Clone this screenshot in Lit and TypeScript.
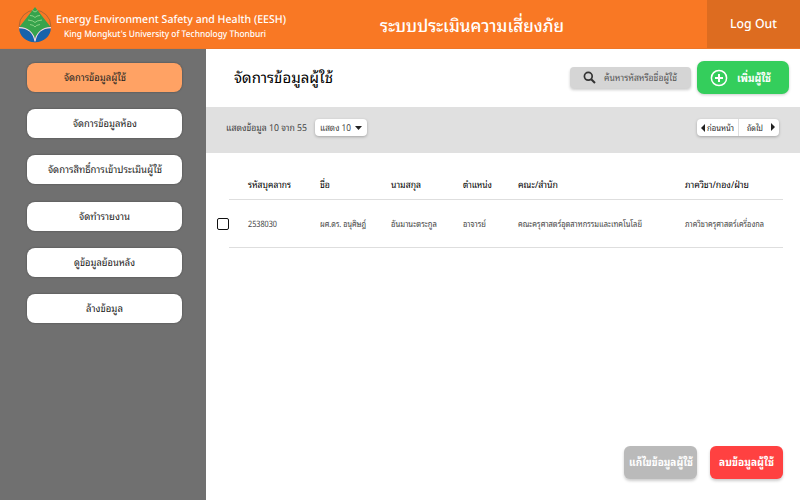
import { LitElement, html, css, svg } from "lit";
import { customElement, property } from "lit/decorators.js";

/* Single line of text condensed or expanded to a given advance width. */
@customElement("fit-label")
class FitLabel extends LitElement {
  @property() text = "";
  @property({ type: Number }) w = 0;
  static styles = css`
    :host { display: block; flex: none; line-height: 0; }
    svg { display: block; height: 1.8em; overflow: visible; }
    text { fill: currentColor; text-rendering: geometricPrecision; }
  `;
  render() {
    return html`<svg width=${this.w} aria-label=${this.text}>
      ${svg`<text x="0" y="1.25em" textLength=${this.w} lengthAdjust="spacingAndGlyphs">${this.text}</text>`}
    </svg>`;
  }
}

const MENU = [
  { text: "จัดการข้อมูลผู้ใช้", w: 62, active: true },
  { text: "จัดการข้อมูลห้อง", w: 64 },
  { text: "จัดการสิทธิ์การเข้าประเมินผู้ใช้", w: 114 },
  { text: "จัดทำรายงาน", w: 51 },
  { text: "ดูข้อมูลย้อนหลัง", w: 61 },
  { text: "ล้างข้อมูล", w: 37 },
];

const HEADS: [string, number][] = [
  ["รหัสบุคลากร", 43], ["ชื่อ", 10], ["นามสกุล", 30],
  ["ตำแหน่ง", 29], ["คณะ/สำนัก", 40], ["ภาควิชา/กอง/ฝ่าย", 64],
];
const ROW: [string, number][] = [
  ["2538030", 29], ["ผศ.ดร. อนุศิษฎ์", 46], ["อันมานะตระกูล", 46],
  ["อาจารย์", 23], ["คณะครุศาสตร์อุตสาหกรรมและเทคโนโลยี", 124], ["ภาควิชาครุศาสตร์เครื่องกล", 79],
];

@customElement("app-root")
class AppRoot extends LitElement {
  static styles = css`
    :host {
      display: flex; flex-direction: column; width: 800px; height: 500px; overflow: hidden;
      background: #fff; color: #222; font-size: 9.5px;
      font-family: "Noto Sans", "Noto Sans Thai Looped", "Noto Looped Thai", "Sarabun", "TH Sarabun New", "Loma", "Open Sans", sans-serif;
    }
    * { box-sizing: border-box; }
    header { display: flex; height: 49px; background: #f97824; color: #fff; border-bottom: 1px solid #ee7628; flex: none; }
    .logo { width: 34px; height: 38px; margin: 6px 3px 0 18px; flex: none; }
    .brand { width: 325px; padding: 9px 0 0 1px; font-size: 10.9px; font-weight: 500; }
    .brand .sub { font-size: 9.2px; margin: -4px 0 0 7.5px; font-weight: 500; }
    .system { padding-top: 10px; font-size: 17.5px; font-weight: 500; flex: 1; }
    .logout { width: 93px; background: #dd6c20; padding: 12px 0 0 23px; font-size: 12.7px; font-weight: 500; }
    .body { display: flex; flex: 1; min-height: 0; }
    nav { width: 206px; background: #707070; padding: 14px 24px 0 27px; display: flex; flex-direction: column; gap: 17.2px; flex: none; }
    .item { height: 29px; border-radius: 8px; background: #fff; display: flex; align-items: center; justify-content: center; padding-bottom: 1px; box-shadow: 0 0 2px #0006; font-size: 10px; color: #222; flex: none; }
    .item.active { background: #ffa264; padding-right: 19px; }
    main { flex: 1; display: flex; flex-direction: column; }
    .top { height: 58px; display: flex; padding: 12px 11px 0 28px; flex: none; }
    .title { font-size: 15px; font-weight: 400; flex: 1; padding-top: 3px; color: #000; }
    .search { width: 121px; height: 21px; margin: 6px 6px 0 0; border-radius: 4px; background: #d5d5d5; display: flex; align-items: center; gap: 8px; padding-left: 13px; box-shadow: 0 2px 3px #0003; color: #555; font-size: 9.5px; }
    .add { width: 92px; height: 33px; border-radius: 7px; background: #34ce5c; display: flex; align-items: center; gap: 9px; padding-left: 13px; box-shadow: 0 1px 3px #0003; color: #fff; font-size: 11px; font-weight: 700; }
    .bar { height: 46px; background: #e0e0e0; display: flex; align-items: center; padding: 0 21px 5px 20px; color: #444; flex: none; }
    .pill { height: 17px; background: #fff; border-radius: 4px; box-shadow: 0 1px 3px #0004; display: flex; align-items: center; }
    .size { width: 52px; margin-left: 8px; padding-left: 5px; gap: 4px; }
    .pager { width: 82px; margin-left: auto; color: #222; font-size: 8.5px; }
    .prev { width: 42px; height: 17px; border-right: 1px solid #ddd; display: flex; align-items: center; gap: 2px; padding-left: 4px; }
    .next { display: flex; align-items: center; gap: 8px; padding-left: 8px; }
    .table { padding: 15px 17px 0 11px; }
    .row { display: grid; grid-template-columns: 12px 19px 72px 71px 72px 55px 167px 1fr; align-items: center; height: 47px; padding-top: 1px; }
    .head { height: 31px; padding-top: 3px; font-size: 9.5px; color: #000; font-weight: 400; }
    .data { font-size: 8.8px; color: #444; }
    .rule { height: 1px; margin-left: 12px; background: #dedede; }
    .check { width: 12px; height: 12px; border: 1.5px solid #111; border-radius: 2px; }
    .actions { margin-top: auto; display: flex; justify-content: flex-end; gap: 13px; padding: 0 17px 21px 0; font-size: 11px; font-weight: 700; color: #fff; }
    .action { width: 73px; height: 33px; border-radius: 6px; display: flex; align-items: center; justify-content: center; padding-bottom: 2px; box-shadow: 0 2px 3px #0003; }
    .edit { background: #bababa; } .delete { background: #ff4141; }
    svg { display: block; flex: none; }
  `;

  label(text: string, w: number, cls = "") {
    return html`<fit-label class=${cls} .text=${text} .w=${w}></fit-label>`;
  }

  render() {
    return html`
      <header>
        <svg class="logo" viewBox="0 0 34 38">
          <circle cx="17" cy="20" r="15.8" fill="none" stroke="#9c6236" stroke-width=".8"/>
          <path d="M1.3 22C10 21 15.5 27 17 34C18.5 27 24 21 32.7 22C33 30 26 36.2 17 36.2S1 30 1.3 22Z" fill="#1763ab"/>
          <path d="M17 1L33 21.5C24 21.5 18.5 27 17 34.5C15.5 27 10 21.5 1 21.5Z" fill="#36a34c"/>
          <path d="M1 21.6C10 21.6 15.7 27 17 35.5C18.3 27 24 21.6 33 21.6" fill="none" stroke="#f6d8ea" stroke-width="1.1"/>
          <path d="M14.5 4.5L17 6L19.5 4.5M12 9.5Q15.5 9.5 17 11.5Q18.5 9.5 22 9.5M10 14Q15.5 14.5 17 16.5Q18.5 14.5 24 14M12 18.5Q16 19 17 21Q18 19 22 18.5" fill="none" stroke="#a1dc92" stroke-width=".8"/>
        </svg>
        <div class="brand">
          ${this.label("Energy Environment Safety and Health (EESH)", 230)}
          ${this.label("King Mongkut's University of Technology Thonburi", 202, "sub")}
        </div>
        <div class="system">${this.label("ระบบประเมินความเสี่ยงภัย", 184)}</div>
        <div class="logout">${this.label("Log Out", 47)}</div>
      </header>
      <div class="body">
        <nav>${MENU.map((m) => html`<div class="item ${m.active ? "active" : ""}">${this.label(m.text, m.w)}</div>`)}</nav>
        <main>
          <div class="top">
            <div class="title">${this.label("จัดการข้อมูลผู้ใช้", 99)}</div>
            <div class="search">
              <svg width="13" height="13" viewBox="0 0 13 13" fill="none" stroke="#333"><circle cx="5.3" cy="5.3" r="3.9" stroke-width="1.7"/><path d="M8.2 8.2L12 12" stroke-width="2"/></svg>
              ${this.label("ค้นหารหัสหรือชื่อผู้ใช้", 73)}
            </div>
            <div class="add">
              <svg width="18" height="18" viewBox="0 0 18 18" fill="none" stroke="#fff"><circle cx="9" cy="9" r="7.6" stroke-width="1.5"/><path d="M9 5V13M5 9H13" stroke-width="2"/></svg>
              ${this.label("เพิ่มผู้ใช้", 34)}
            </div>
          </div>
          <div class="bar">
            ${this.label("แสดงข้อมูล 10 จาก 55", 81)}
            <div class="pill size">${this.label("แสดง 10", 31)}<svg width="7" height="4" viewBox="0 0 7 4"><path d="M0 0H7L3.5 4Z" fill="#222"/></svg></div>
            <div class="pill pager">
              <div class="prev"><svg width="4" height="8" viewBox="0 0 4 8"><path d="M4 0V8L0 4Z" fill="#222"/></svg>${this.label("ก่อนหน้า", 27)}</div>
              <div class="next">${this.label("ถัดไป", 16)}<svg width="4" height="8" viewBox="0 0 4 8"><path d="M0 0V8L4 4Z" fill="#222"/></svg></div>
            </div>
          </div>
          <div class="table">
            <div class="row head"><span></span><span></span>${HEADS.map(([t, w]) => this.label(t, w))}</div>
            <div class="rule"></div>
            <div class="row data"><span class="check"></span><span></span>${ROW.map(([t, w]) => this.label(t, w))}</div>
            <div class="rule"></div>
          </div>
          <div class="actions">
            <div class="action edit">${this.label("แก้ไขข้อมูลผู้ใช้", 64)}</div>
            <div class="action delete">${this.label("ลบข้อมูลผู้ใช้", 55)}</div>
          </div>
        </main>
      </div>`;
  }
}
